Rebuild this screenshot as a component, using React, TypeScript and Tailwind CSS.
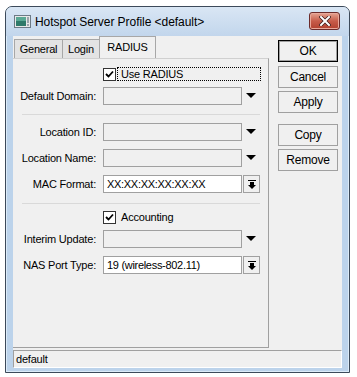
import React from "react";

const font = { fontFamily: '"Liberation Sans", Arial, sans-serif' };

function Arrow() {
  return (
    <div className="w-[18px] h-[18px] flex items-center justify-center">
      <svg width="10" height="6" viewBox="0 0 10 6">
        <path d="M0 0 H10 L5 5 Z" fill="#000" />
      </svg>
    </div>
  );
}

function DropButton() {
  return (
    <div className="ml-px w-[17px] h-[18px] border border-[#a0a0a0] bg-[#f0f0f0] flex items-center justify-center">
      <svg width="8" height="9" viewBox="0 0 8 9">
        <rect x="0" y="0" width="8" height="1" fill="#000" />
        <rect x="2" y="2" width="4" height="3" fill="#000" />
        <path d="M0 5 H8 L4 9 Z" fill="#000" />
      </svg>
    </div>
  );
}

function CheckBox() {
  return (
    <div className="w-[13px] h-[13px] border border-[#333] bg-white flex items-center justify-center">
      <svg width="9" height="9" viewBox="0 0 9 9">
        <path d="M1 4 L3.5 6.5 L8 1.5" stroke="#000" strokeWidth="1.8" fill="none" />
      </svg>
    </div>
  );
}

function Field({
  label,
  value,
  white,
  button,
  mt,
}: {
  label: string;
  value?: string;
  white?: boolean;
  button?: boolean;
  mt: string;
}) {
  return (
    <div className={`flex items-center ${mt}`}>
      <div className="w-[84px] text-right pr-px text-[11px] tracking-[-0.2px] text-black">{label}</div>
      <div
        className={`ml-[6px] w-[139px] h-[18px] border border-[#a0a0a0] ${
          white ? "bg-white" : "bg-[#f0f0f0]"
        } pl-[3px] text-[11px] tracking-[-0.3px] leading-[16px] text-black`}
      >
        {value}
      </div>
      {button ? <DropButton /> : <Arrow />}
    </div>
  );
}

function Btn({ label, primary, mt }: { label: string; primary?: boolean; mt: string }) {
  return (
    <div
      className={`${mt} w-[60px] h-[22px] flex items-center justify-center text-[12px] tracking-[-0.2px] text-black bg-[#f0f0f0] ${
        primary ? "border border-black shadow-[inset_0_0_0_1px_#a0a0a0]" : "border border-[#a0a0a0]"
      }`}
    >
      {label}
    </div>
  );
}

export default function App() {
  return (
    <div className="w-[357px] h-[377px] bg-white overflow-hidden" style={font}>
      <div className="ml-[5px] mt-[6px] w-[345px] h-[367px] border border-[#3c4a5a] rounded-t-[7px] bg-[#bcd3eb] flex flex-col shadow-[inset_0_0_0_1px_#dcebf8]">
        {/* title bar */}
        <div className="h-[29px] flex items-center pl-[8px] pr-[9px] rounded-t-[6px] bg-gradient-to-b from-[#d9e6f4] to-[#c2d6ec]">
          <svg width="17" height="13" viewBox="0 0 17 13" className="mt-[-1px]">
            <rect x="0.5" y="0.5" width="16" height="12" fill="#e8e8e8" stroke="#6c7a86" />
            <rect x="2" y="2" width="10" height="9" fill="#2f7a6a" />
            <rect x="2" y="2" width="10" height="4" fill="#5aa894" />
            <rect x="13" y="2" width="2" height="6" fill="#9aa4ac" />
            <rect x="13" y="9" width="2" height="2" fill="#9aa4ac" />
          </svg>
          <div className="ml-[4px] text-[12px] text-black tracking-[-0.05px]">Hotspot Server Profile &lt;default&gt;</div>
          <div className="ml-auto mt-[-2px] w-[31px] h-[18px] rounded-[3px] border border-[#6b2b2b] bg-gradient-to-b from-[#e4a493] via-[#c75c4a] to-[#b2402f] flex items-center justify-center shadow-[inset_0_0_0_1px_#e9a99b]">
            <svg width="12" height="10" viewBox="0 0 12 10">
              <path d="M2 1 L10 9 M10 1 L2 9" stroke="#3a1a1a" strokeWidth="3.4" strokeLinecap="square" />
              <path d="M2 1 L10 9 M10 1 L2 9" stroke="#fff" strokeWidth="2" strokeLinecap="square" />
            </svg>
          </div>
        </div>

        {/* client area */}
        <div className="mx-[7px] h-[332px] bg-[#f0f0f0] flex flex-col">
          <div className="flex">
            {/* left: tabs + panel */}
            <div className="w-[256px] flex flex-col">
              <div className="h-[22px] flex items-end pl-px">
                <div className="h-[19px] w-[49px] border border-b-0 border-[#a7a7a7] bg-[#e3e3e3] flex items-center justify-center text-[11px] tracking-[-0.2px] text-black">
                  General
                </div>
                <div className="h-[19px] w-[37px] border border-l-0 border-b-0 border-[#a7a7a7] bg-[#e3e3e3] flex items-center justify-center text-[11px] tracking-[-0.2px] text-black">
                  Login
                </div>
                <div className="h-[22px] w-[57px] border border-b-0 border-[#a7a7a7] bg-[#f0f0f0] flex items-start pt-[2px] justify-center text-[11px] tracking-[-0.2px] text-black -ml-px">
                  RADIUS
                </div>
              </div>
              <div className="h-[290px] border-r border-b border-t border-[#a0a0a0] border-t-[#d0d0d0] flex flex-col">
                {/* Use RADIUS */}
                <div className="mt-[8px] flex items-center ml-[90px] h-[14px]">
                  <CheckBox />
                  <div className="ml-px w-[144px] h-[14px] border border-dotted border-black pl-[3px] text-[11px] tracking-[-0.2px] leading-[12px] text-black">
                    Use RADIUS
                  </div>
                </div>
                <Field label="Default Domain:" mt="mt-[6px]" />
                <div className="mt-[9px] ml-[9px] w-[238px] h-px bg-[#d9d9d9]" />
                <Field label="Location ID:" mt="mt-[8px]" />
                <Field label="Location Name:" mt="mt-[8px]" />
                <Field label="MAC Format:" value="XX:XX:XX:XX:XX:XX" white button mt="mt-[8px]" />
                <div className="mt-[10px] ml-[9px] w-[238px] h-px bg-[#d9d9d9]" />
                <div className="mt-[7px] flex items-center ml-[90px] h-[13px]">
                  <CheckBox />
                  <div className="ml-[5px] text-[11px] tracking-[-0.2px] text-black">Accounting</div>
                </div>
                <Field label="Interim Update:" mt="mt-[6px]" />
                <Field label="NAS Port Type:" value="19 (wireless-802.11)" white button mt="mt-[8px]" />
              </div>
            </div>

            {/* right: buttons */}
            <div className="ml-[9px] pt-[4px] flex flex-col">
              <Btn label="OK" primary mt="mt-0" />
              <Btn label="Cancel" mt="mt-[4px]" />
              <Btn label="Apply" mt="mt-[3px]" />
              <Btn label="Copy" mt="mt-[11px]" />
              <Btn label="Remove" mt="mt-[3px]" />
            </div>
          </div>

          {/* status bar */}
          <div className="mt-[2px] w-[329px] h-[18px] border-t border-l border-[#a0a0a0] border-r border-b border-r-white border-b-white flex items-center pl-[2px] text-[11px] tracking-[-0.2px] text-black">
            default
          </div>
        </div>
      </div>
    </div>
  );
}
